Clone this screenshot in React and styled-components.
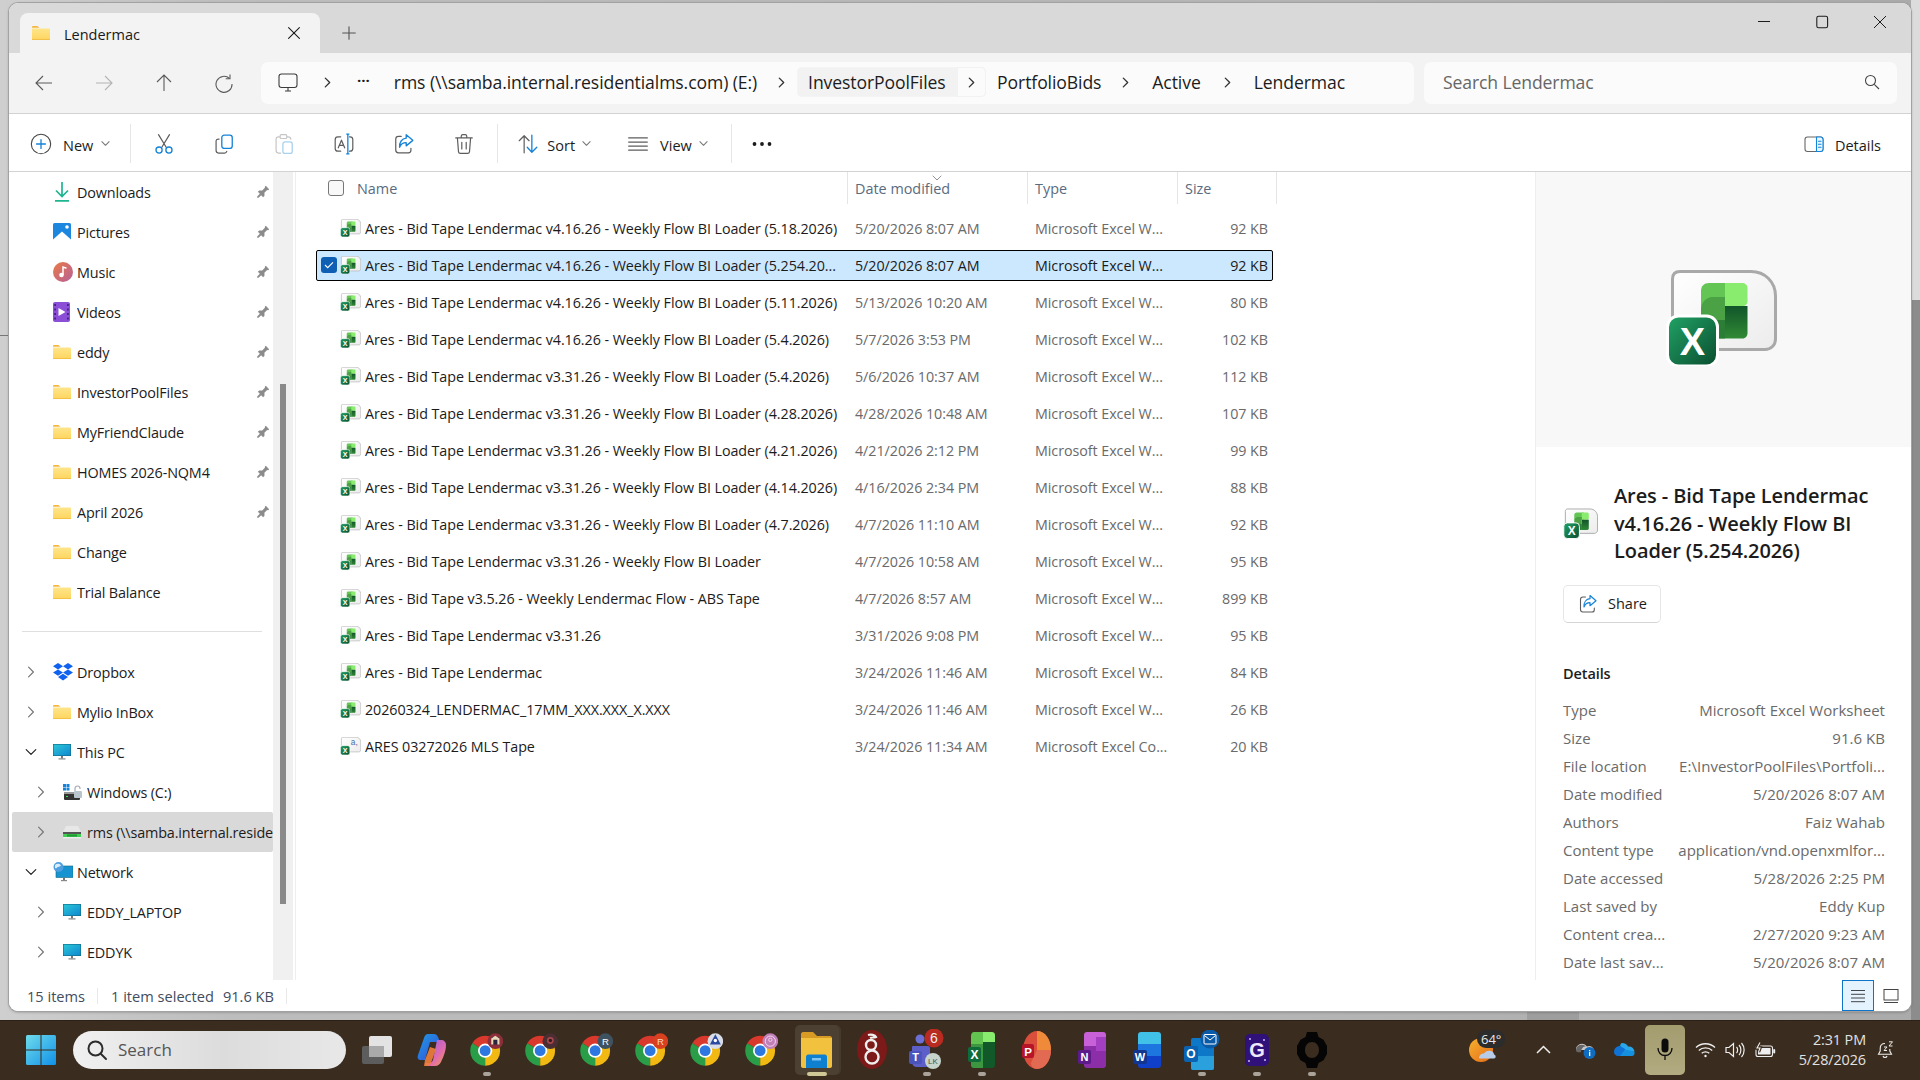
import React from "react";
import styled, { createGlobalStyle } from "styled-components";

const FONT = `"Open Sans", "Noto Sans", "Liberation Sans", sans-serif`;

const Global = createGlobalStyle`
  html, body { margin: 0; padding: 0; width: 1920px; height: 1080px; overflow: hidden; }
  body { font-family: ${FONT}; color: #1b1b1b; }
  * { box-sizing: border-box; }
  svg { display: block; flex: none; }
`;

const Desktop = styled.div`
  width: 1920px; height: 1080px; display: flex; flex-direction: column;
  background:
    linear-gradient(#777, #777) 0 335px / 9px 1px no-repeat,
    linear-gradient(#9e9e9e, #9e9e9e) 1527px 1011px / 52px 9px no-repeat,
    linear-gradient(#dcdcdc 0 300px, #8c8c8c 300px) 1911px 0 / 9px 1020px no-repeat,
    linear-gradient(90deg, #cfcfcf 0, #bdbdbd 12%, #b4b4b4 70%, #aaa 100%);
`;
const Win = styled.div`
  margin: 3px 9px 0; height: 1008px; display: flex; flex-direction: column; overflow: hidden;
  background: #fff; border-radius: 9px; box-shadow: 0 0 0 1px #a2a2a2, 0 1px 3px rgba(0,0,0,.35);
`;
const TitleBar = styled.div`
  height: 50px; flex: none; background: #d9d9d9; display: flex; align-items: flex-end; padding-left: 11px; position: relative;
`;
const Tab = styled.div`
  width: 300px; height: 40px; background: #f3f3f3; border-radius: 8px 8px 0 0; display: flex; align-items: center;
  padding: 0 20px 0 12px; font-size: 14.5px; color: #1a1a1a;
`;
const TabLabel = styled.span`margin: 2px 0 0 14px; flex: 1; font-weight: 500;`;
const NewTab = styled.div`margin: 0 0 10px 19px; width: 20px; height: 20px; color: #555; display: flex; align-items: center; justify-content: center;`;
const WinCtrls = styled.div`
  margin-left: auto; display: flex; align-self: flex-start; margin-top: 9px; padding-right: 21px; gap: 38px; color: #1c1c1c;
`;
const NavBar = styled.div`
  height: 61px; flex: none; background: #f3f3f3; border-bottom: 1px solid #d2d2d2; display: flex; align-items: flex-start; padding: 9px 14px 0 0;
`;
const NavButtons = styled.div`width: 252px; flex: none; display: flex; padding: 11px 0 0 25px; gap: 40px;`;
const AddressBar = styled.div`
  width: 1153px; height: 42px; flex: none; background: #fbfbfb; border-radius: 7px; display: flex; align-items: center; font-size: 17.6px; letter-spacing: -.1px; color: #1c1c1c; white-space: nowrap; padding-bottom: 2px;
`;
const Crumb = styled.span`margin-left: ${p => p.$ml}px;`;
const Chev = styled.span`margin-left: ${p => p.$ml}px; display: flex; color: #333;`;
const HoverCrumb = styled.div`
  margin-left: ${p => p.$ml}px; height: 30px; display: flex; align-items: center; border-radius: 5px; background: #f2f2f2; padding-left: 11px; width: 189px; box-shadow: inset 0 0 0 1px #f4f4f4;
`;
const HoverChev = styled.div`
  margin-left: auto; width: 29px; height: 30px; background: #fbfbfb; border: 1px solid #f2f2f2; border-radius: 0 5px 5px 0; display: flex; align-items: center; justify-content: center; color: #333;
`;
const Dots = styled.span`margin-left: ${p => p.$ml}px; font-weight: 700; letter-spacing: 0; font-size: 15px; transform: translateY(-2px);`;
const SearchBox = styled.div`
  margin-left: 10px; flex: 1; height: 42px; background: #fbfbfb; border-radius: 7px; display: flex; align-items: center; justify-content: space-between; padding: 0 17px 2px 19px; font-size: 17.6px; letter-spacing: -.12px; color: #666;
`;
const Toolbar = styled.div`
  height: 58px; flex: none; background: #fff; border-bottom: 1px solid #d2d2d2; display: flex; align-items: center; padding: 2px 30px 0 22px; font-size: 14.5px; color: #1c1c1c;
`;
const ToolGroup = styled.div`display: flex; align-items: center; gap: ${p => p.$gap || 0}px; margin-left: ${p => p.$ml || 0}px;`;
const ToolSep = styled.div`width: 1px; height: 39px; background: #e6e6e6; margin-left: ${p => p.$ml}px;`;
const ToolText = styled.span`margin: 3px 0 0 ${p => p.$ml}px;`;
const Caret = styled.span`margin-left: ${p => p.$ml}px; color: #777; display: flex;`;
const Spacer = styled.div`flex: 1;`;

const Body = styled.div`flex: 1; min-height: 0; display: flex;`;
const Sidebar = styled.div`width: 264px; flex: none; overflow: hidden; font-size: 14.4px; letter-spacing: -.16px; color: #1c1c1c;`;
const Track = styled.div`width: 20px; flex: none; background: #f0f0f0; padding: 212px 7px 0;`;
const Thumb = styled.div`height: 520px; background: #8a8a8a;`;
const NavRow = styled.div`
  height: 40px; display: flex; align-items: center; margin-left: 3px; white-space: nowrap; overflow: hidden;
  padding-left: ${p => p.$indent ? 51 : 41}px; background: ${p => p.$active ? "#d9d9d9" : "transparent"};
  border-radius: 2px;
`;
const TreeCaret = styled.span`width: 26px; margin: 0 7px 0 -33px; padding-left: 5px; display: flex; color: ${p => p.$open ? "#222" : "#777"};`;
const NavIcon = styled.span`width: 24px; flex: none; display: flex;`;
const NavLabel = styled.span`flex: 1; overflow: hidden;`;
const PinSlot = styled.span`margin-right: 2px; width: 16px; flex: none;`;
const NavSep = styled.div`height: 1px; background: #dfdfdf; margin: 19px 11px 20px 13px;`;

const Main = styled.div`flex: 1; min-width: 0; margin-left: 2px; border-left: 1px solid #eee; font-size: 14.3px; letter-spacing: -.05px;`;
const HeaderRow = styled.div`
  height: 32px; display: grid; grid-template-columns: 519px 180px 150px 100px; padding-left: 32px; position: relative; font-size: 14.4px; letter-spacing: 0;
`;
const HeadCell = styled.div`display: flex; align-items: center; padding-left: ${p => p.$first ? 0 : 7}px; border-left: ${p => p.$first ? "none" : "1px solid #e5e5e5"}; border-right: ${p => p.$last ? "1px solid #e5e5e5" : "none"}; color: #5a6b80;`;
const HeadBox = styled.div`width: 16px; height: 16px; border: 1px solid #777; border-radius: 3px; background: #f8f8f8; margin-right: 13px;`;
const SortMark = styled.div`position: absolute; left: 636px; top: 1px; color: #777;`;
const Rows = styled.div`padding: 8.5px 0 0 20px; display: flex; flex-direction: column; gap: 6px;`;
const Row = styled.div`
  width: 957px; height: 31px; display: grid; grid-template-columns: 19px 25px 490px 180px 150px 83px; align-items: center;
  padding: 0 4px; border: 1px solid ${p => p.$sel ? "#000" : "transparent"}; border-radius: 2px; background: ${p => p.$sel ? "#cce8ff" : "transparent"};
  color: #666; white-space: nowrap;
`;
const CheckSlot = styled.div`width: 16px; height: 16px; border-radius: 3px; background: ${p => p.$on ? "#0f5fb5" : "transparent"}; display: flex; align-items: center; justify-content: center;`;
const NameCell = styled.span`color: #1b1b1b;`;
const Cell = styled.span`color: ${p => p.$sel ? "#1b1b1b" : "#6a6a6a"};`;
const SizeCell = styled(Cell)`text-align: right;`;

const Details = styled.div`width: 376px; flex: none; border-left: 1px solid #eee; display: flex; flex-direction: column; background: #fff;`;
const Preview = styled.div`height: 275px; flex: none; background: #f8f8f8; padding: 98px 0 0 129px;`;
const DetailBody = styled.div`padding: 35px 26px 0 27px;`;
const TitleRow = styled.div`display: flex; align-items: center; gap: 16px;`;
const DetailTitle = styled.div`font-size: 20px; font-weight: 600; line-height: 27.5px; letter-spacing: -.1px; color: #1c1c1c; white-space: nowrap;`;
const ShareBtn = styled.div`
  margin-top: 20px; width: 98px; height: 38px; border: 1px solid #e6e6e6; border-bottom-color: #d4d4d4; border-radius: 5px; display: flex; align-items: center; gap: 10px; padding-left: 14px; font-size: 14.5px; color: #1c1c1c; background: #fff;
`;
const DetailHead = styled.div`margin-top: 40px; font-size: 14.5px; font-weight: 600; letter-spacing: -.1px; color: #1c1c1c; height: 22px; line-height: 22px;`;
const Props = styled.div`margin-top: 11px; display: flex; flex-direction: column;`;
const Prop = styled.div`height: 28px; display: flex; align-items: center; justify-content: space-between; color: #6a6a6a; font-size: 15px; letter-spacing: .03px; white-space: nowrap;`;

const StatusBar = styled.div`height: 31px; flex: none; display: flex; align-items: center; padding-left: 18px; font-size: 14.6px; color: #3f4d60; background: #fff;`;
const StatusItem = styled.span`margin-left: ${p => p.$ml || 0}px;`;
const StatusSep = styled.div`width: 1px; height: 16px; background: #e9e9e9; margin-left: ${p => p.$ml}px;`;
const ViewBtn = styled.div`
  width: ${p => p.$w}px; height: 31px; display: flex; align-items: center; justify-content: center; border: 1px solid ${p => p.$on ? "#0f74c7" : "transparent"}; background: ${p => p.$on ? "#e5f3ff" : "transparent"}; color: #333;
`;
const ViewGroup = styled.div`margin-left: auto; display: flex; padding-right: 4px;`;

const Taskbar = styled.div`
  margin-top: 9px; height: 60px; flex: none; background: #3a2c1e; border-top: 1px solid #2c2117; padding-bottom: 2px; display: flex; align-items: center; position: relative; color: #e8e8e8;
`;
const StartSlot = styled.div`width: 73px; flex: none; padding-left: 26px;`;
const SearchPill = styled.div`
  width: 273px; height: 38px; border-radius: 19px; background: linear-gradient(90deg, #f0f0f0, #dcdcdc 55%, #e8e8e8); display: flex; align-items: center; padding-left: 13px; gap: 10px; color: #555; font-size: 17px; flex: none;
`;
const Apps = styled.div`display: flex; margin-left: 3px;`;
const AppSlot = styled.div`
  width: 55px; height: 50px; display: flex; align-items: center; justify-content: center; position: relative; flex: none;
`;
const AppIcon = styled.span`position: relative;`;
const ActiveBg = styled.div`position: absolute; left: 6px; top: 0; width: 44px; height: 50px; background: #4c4033; border-radius: 5px; box-shadow: 2px 0 0 #453a2e;`;
const RunDot = styled.div`
  position: absolute; bottom: -1px; left: 50%; transform: translateX(-50%); width: ${p => p.$wide ? 20 : 8}px; height: 4px; border-radius: 2px; background: ${p => p.$wide ? "#cfc795" : "#a9a39a"};
`;
const Tray = styled.div`margin-left: auto; display: flex; align-items: center; padding-right: 25px; color: #ededed;`;
const TrayIcon = styled.div`width: ${p => p.$w || 30}px; display: flex; justify-content: center; flex: none; margin-left: ${p => p.$ml || 0}px;`;
const MicBox = styled.div`width: 40px; height: 50px; background: linear-gradient(#a39c6f, #b2aa80); border-radius: 5px; display: flex; align-items: center; justify-content: center; color: #111; margin-left: 6px;`;
const WeatherBox = styled.div`position: relative; width: 30px; height: 30px; margin-right: 29px;`;
const WeatherPill = styled.div`position: absolute; left: 8px; top: -5px; background: #2c2c2c; color: #e9e9e9; border-radius: 9px; font-size: 13px; padding: 0 4px; height: 18px; line-height: 18px; white-space: nowrap;`;
const Clock = styled.div`margin-left: 4px; width: 82px; text-align: right; font-size: 14.4px; line-height: 20px; color: #e2e2e2; letter-spacing: -.1px; white-space: nowrap;`;

/* ---------- drawings ---------- */
const Folder = ({ s = 18 }) => (
  <svg width={s} height={s * 0.8} viewBox="0 0 18 14.4">
    <defs><linearGradient id="fg" x1="0" y1="0" x2="0" y2="1"><stop offset="0" stopColor="#ffe58a" /><stop offset="1" stopColor="#fdd55e" /></linearGradient></defs>
    <path d="M0 1.2C0 .5.5 0 1.2 0h4.2l2 1.8H0z" fill="#f6b73c" />
    <path d="M0 2.4h16.8c.7 0 1.2.5 1.2 1.2v9.6c0 .7-.5 1.2-1.2 1.2H1.2C.5 14.4 0 13.9 0 13.2z" fill="url(#fg)" />
    <path d="M0 13.4h18v.1c0 .5-.5.9-1.2.9H1.2C.5 14.4 0 14 0 13.5z" fill="#e9a92b" />
  </svg>
);

let uid = 0;
const ExcelDoc = ({ w, h, csv }) => {
  const id = React.useMemo(() => "xl" + (uid++), []);
  return (
    <svg width={w} height={h} viewBox="-4 0 112 96">
      <defs>
        <linearGradient id={id + "b"} x1="0" y1="0" x2="1" y2="1"><stop offset="0" stopColor="#21a366" /><stop offset="1" stopColor="#0a4d2f" /></linearGradient>
        <linearGradient id={id + "d"} x1="0" y1="0" x2="1" y2="1"><stop offset="0" stopColor="#ffffff" /><stop offset="1" stopColor="#ececec" /></linearGradient>
        <linearGradient id={id + "s"} x1="0" y1="0" x2="0" y2="1"><stop offset="0" stopColor="#11552a" /><stop offset="1" stopColor="#318a35" /></linearGradient>
      </defs>
      <path d="M11 1.5H82C96 1.5 106.5 12 106.5 26V69C106.5 75 102 79.5 96 79.5H11C6 79.5 3.5 76 3.5 71V9C3.5 4.5 6 1.5 11 1.5Z" fill={`url(#${id}d)`} stroke="#a9a9a9" strokeWidth="3" />
      {csv ? (
        <text x="72" y="42" textAnchor="middle" fontFamily="Liberation Sans, sans-serif" fontSize="44" fill="#4a6ea8">a,</text>
      ) : (
        <g>
          <path d="M40 13h23v23H32V21c0-5 3-8 8-8z" fill="#63c654" />
          <path d="M56 13h17c3 0 5.5 2 5.5 5v13c0 3-2 5-5 5H56z" fill="#8aec6e" />
          <path d="M56 36h22.5v27c0 3-2 5.5-5 5.5H56z" fill={`url(#${id}s)`} />
          <path d="M56 36v32.5H42V65H32V38c0-2 2-9 10-11h14z" fill="#4aa245" />
          <rect x="40" y="50" width="16" height="18.5" fill="#2c7d35" />
        </g>
      )}
      <rect x="-1.5" y="46" width="50" height="50" rx="11" fill={`url(#${id}b)`} stroke="#fff" strokeWidth="3" />
      <text x="23.5" y="85" textAnchor="middle" fontFamily="Liberation Sans, sans-serif" fontWeight="700" fontSize="38" fill="#fff">X</text>
    </svg>
  );
};

const Ic = ({ children, s = 20 }) => <svg width={s} height={s} viewBox="0 0 20 20" fill="none" strokeLinecap="round" strokeLinejoin="round">{children}</svg>;

const G = "#5d5d5d", B = "#1583d8";
const NewIcon = () => <Ic s={22}><circle cx="10" cy="10" r="8.8" stroke="#444" strokeWidth="1" /><path d="M10 6v8M6 10h8" stroke={B} strokeWidth="1.2" /></Ic>;
const CutIcon = () => <Ic s={22}><path d="M5 1.5l7 11.5M15 1.5L8 13" stroke={G} strokeWidth="1.1" /><circle cx="5.5" cy="15.5" r="2.8" stroke={B} strokeWidth="1.2" /><circle cx="14.5" cy="15.5" r="2.8" stroke={B} strokeWidth="1.2" /></Ic>;
const CopyIcon = () => <Ic s={22}><rect x="8" y="2" width="9.5" height="12" rx="2.2" stroke={B} strokeWidth="1.2" /><path d="M5.5 5.5H5C3.5 5.5 2.8 6.4 2.8 7.5V16c0 1.3 1 2.2 2.2 2.2h5.5c1 0 1.8-.6 2-1.5" stroke={G} strokeWidth="1.1" /></Ic>;
const PasteIcon = () => <Ic s={22}><path d="M6 3.5H5C3.5 3.5 2.8 4.4 2.8 5.5V16c0 1.3 1 2.2 2.2 2.2h2M13 3.5h1c1 0 2 .6 2.2 2" stroke="#c6c6c6" strokeWidth="1.1" /><rect x="6.5" y="1.5" width="6" height="3.5" rx="1" stroke="#c6c6c6" strokeWidth="1.1" /><rect x="9" y="8" width="8.5" height="10.5" rx="2" stroke="#a8d2f0" strokeWidth="1.2" /></Ic>;
const RenameIcon = () => <Ic s={22}><path d="M7 3.500H4.500C3 3.500 2 4.500 2 6v8c0 1.500 1 2.500 2.500 2.500H7M15 3.500h.5C17 3.500 18 4.500 18 6v8c0 1.500-1 2.500-2.500 2.500H15" stroke={G} strokeWidth="1.1" /><path d="M4.8 13.500L7.700 6.500l2.900 7M5.800 11.200h3.800" stroke={G} strokeWidth="1.1" /><path d="M12.500 1h2M12.500 19h2M13.500 1v18" stroke={B} strokeWidth="1.2" /></Ic>;
const ShareIcon = ({ s = 22 }) => <Ic s={s}><path d="M7.500 3H5C3.400 3 2.500 4 2.500 5.500v10C2.500 17 3.500 18 5 18h9c1.500 0 2.300-1 2.300-2.300V14" stroke={G} strokeWidth="1.1" /><path d="M12 1.500l6 5.200-6 5v-3C9 8.700 7 10 6 13c-.3-4.500 2-8 6-8.300z" stroke={B} strokeWidth="1.2" /></Ic>;
const TrashIcon = () => <Ic s={22}><path d="M2.500 4.500h15M7.500 4.500V3c0-.9.6-1.500 1.500-1.500h2c.9 0 1.500.6 1.500 1.500v1.500M4 4.500l1 12.500c.1 1 .8 1.500 1.700 1.500h6.600c.9 0 1.600-.5 1.700-1.500l1-12.500" stroke={G} strokeWidth="1.1" /><path d="M8 8.500v6M12 8.500v6" stroke={G} strokeWidth="1.1" /></Ic>;
const SortIcon = () => <Ic s={22}><path d="M6.500 18V2.500M2 7l4.500-4.500L11 7" stroke={G} strokeWidth="1.1" /><path d="M13.500 2v15.500M9.300 13l4.200 4.500 4.500-4.500" stroke={B} strokeWidth="1.2" /></Ic>;
const ViewIcon = () => <Ic s={22}><path d="M1.500 4.500h17M1.500 8.200h17M1.500 11.900h17M1.500 15.600h17" stroke={G} strokeWidth="1.1" /></Ic>;
const DetailsIcon = () => <Ic s={20}><rect x="1" y="3" width="18" height="14.500" rx="2.500" stroke="#666" strokeWidth="1.1" /><path d="M12.500 3h4c1.500 0 2.500 1 2.500 2.500v9.500c0 1.500-1 2.500-2.500 2.500h-4z" fill="#e9f5ff" stroke={B} strokeWidth="1.1" /><path d="M14.500 7.200h2.500M14.500 10.200h2.500M14.500 13.200h2.500" stroke={B} strokeWidth="1.1" /></Ic>;
const Small = ({ d, s = 10, sw = 1 }) => <svg width={s} height={s} viewBox="0 0 10 10" fill="none"><path d={d} stroke="currentColor" strokeWidth={sw} strokeLinecap="round" strokeLinejoin="round" /></svg>;
const Right = ({ s = 11, sw = 1.2 }) => <Small s={s} sw={sw} d="M3 1l4 4-4 4" />;
const Down = ({ s = 11, sw = 1.2 }) => <Small s={s} sw={sw} d="M1 3l4 4 4-4" />;

const Pin = () => <svg width="15" height="15" viewBox="0 0 16 16"><path fill="#8b8b8b" transform="rotate(45 8 8)" d="M5.500.5h5V2l-.8.700v4.100l2.300 2.200V11H9v4l-1 1-1-1v-4H4V9l2.300-2.200V2.700L5.500 2z" /></svg>;
const DlIcon = () => <svg width="18" height="20" viewBox="0 0 18 20" fill="none"><path d="M9 0v14M3 8.500L9 14.500l6-6" stroke="#1fb58f" strokeWidth="1.7" /><path d="M2 18.800h14" stroke="#1fb58f" strokeWidth="1.7" /></svg>;
const PicIcon = () => <svg width="18" height="18" viewBox="0 0 18 18"><rect width="18" height="18" rx="1.500" fill="#1d87e0" /><path d="M0 16.500L9 8.500l9 8v1.500H0z" fill="#fff" /><circle cx="14" cy="4" r="1.800" fill="#fff" /></svg>;
const MusicIcon = () => <svg width="20" height="20" viewBox="0 0 20 20"><defs><linearGradient id="mu" x1="0" y1="0" x2="1" y2="1"><stop offset="0" stopColor="#e97b43" /><stop offset="1" stopColor="#b75f9c" /></linearGradient></defs><circle cx="10" cy="10" r="10" fill="url(#mu)" /><circle cx="8.500" cy="13" r="2.300" fill="#fff" /><path d="M10 13V5l3.500 1.200" stroke="#fff" strokeWidth="1.5" fill="none" /></svg>;
const VideoIcon = () => <svg width="17" height="20" viewBox="0 0 17 20"><rect width="17" height="20" rx="2" fill="#8a4fd6" /><path d="M5.500 6l7 4-7 4z" fill="#fff" /><g fill="#3d1d80"><rect x="1.3" y="2" width="1.6" height="2" /><rect x="1.3" y="6.500" width="1.6" height="2" /><rect x="1.3" y="11" width="1.6" height="2" /><rect x="1.3" y="15.500" width="1.6" height="2" /><rect x="14.1" y="2" width="1.6" height="2" /><rect x="14.1" y="6.500" width="1.6" height="2" /><rect x="14.1" y="11" width="1.6" height="2" /><rect x="14.1" y="15.500" width="1.6" height="2" /></g></svg>;
const DropboxIcon = () => <svg width="20" height="18" viewBox="0 0 20 18" fill="#0f62f0"><path d="M5 0l5 3.200-5 3.200L0 3.200zM15 0l5 3.200-5 3.200-5-3.200zM0 9.600l5-3.200 5 3.200-5 3.200zM15 6.400l5 3.200-5 3.200-5-3.200zM5 14l5-3.200 5 3.200-5 3.400z" /></svg>;
const PCIcon = ({ s = 18 }) => <svg width={s} height={s * 16 / 18} viewBox="0 0 18 16"><defs><linearGradient id="pc" x1="0" y1="0" x2="1" y2="1"><stop offset="0" stopColor="#2bc6d8" /><stop offset="1" stopColor="#1088d0" /></linearGradient></defs><rect y="0" width="18" height="12" fill="#0d6b86" /><rect x=".6" y=".6" width="16.8" height="10.8" fill="url(#pc)" /><rect x="8" y="12" width="2" height="2.500" fill="#777" /><rect x="5.500" y="14.300" width="7" height="1.200" fill="#888" /></svg>;
const WinDrive = () => <svg width="20" height="17" viewBox="0 0 20 17"><g fill="#1683d8"><rect width="3" height="3" /><rect x="3.500" width="3" height="3" /><rect y="3.500" width="3" height="3" /><rect x="3.500" y="3.500" width="3" height="3" /></g><rect x="1" y="8" width="16" height="8" rx="1" fill="#333" /><rect x="1" y="8" width="16" height="2" fill="#999" /><rect x="3" y="12" width="2" height="1" fill="#3ddc5a" /><path d="M12 7V4.500a2.500 2.500 0 015 0V5" stroke="#aab" strokeWidth="1.2" fill="none" /><rect x="11" y="7" width="8" height="7" rx="1" fill="#b9c4cc" /></svg>;
const NetDrive = () => <svg width="18" height="13" viewBox="0 0 18 13"><path d="M3 0h12l3 6H0z" fill="#e7e7e7" /><rect y="6" width="18" height="2" fill="#555" /><rect y="8" width="18" height="3" fill="#3fcf52" /><rect x="4" y="8.500" width="10" height="2" fill="#1f9a32" /><rect y="11" width="18" height="1.500" fill="#eee" /></svg>;
const NetIcon = () => <svg width="20" height="20" viewBox="0 0 20 20"><rect x="3" y="4" width="17" height="11.500" fill="#1793d1" stroke="#0d6b86" strokeWidth=".6" /><rect x="10" y="15.500" width="2" height="2.500" fill="#777" /><rect x="8" y="18" width="6" height="1.200" fill="#888" /><circle cx="5.500" cy="5" r="5" fill="#4f9fe0" /><path d="M2 3c2-2 5-1.500 6 .5-1 1-2 1-3 1.500S3 7 2 6z" fill="#dceefb" /></svg>;

const CheckMark = () => <svg width="10" height="8" viewBox="0 0 10 8" fill="none"><path d="M1 4l2.700 2.700L9 1.300" stroke="#fff" strokeWidth="1.1" /></svg>;

const Chrome = ({ badge, children }) => (
  <svg width="33" height="34" viewBox="0 0 48 50">
    <g transform="translate(0 4)">
      <path d="M22 22L2.950 11A22 22 0 0 1 41.050 11Z" fill="#d9382c" />
      <path d="M22 22L41.050 11A22 22 0 0 1 22 44Z" fill="#f2b912" />
      <path d="M22 22L22 44A22 22 0 0 1 2.950 11Z" fill="#2a9d49" />
      <circle cx="22" cy="22" r="10.500" fill="#fff" />
      <circle cx="22" cy="22" r="8" fill="#2d78e0" />
    </g>
    {badge && <circle cx="37" cy="12" r="11.500" fill={badge} />}
    {children}
  </svg>
);
const BadgeR = ({ c = "#fff" }) => <text x="37" y="17" textAnchor="middle" fontSize="14" fontFamily="Liberation Sans, sans-serif" fill={c}>R</text>;

const TaskIcons = {
  taskview: () => <svg width="30" height="28" viewBox="0 0 30 28"><rect x="0" y="10" width="22" height="18" rx="2" fill="#5d5d5d" /><rect x="7" y="0" width="23" height="21" rx="2" fill="#e3e3e3" /><rect x="7" y="10" width="15" height="11" fill="#a9a9a9" /></svg>,
  copilot: () => <svg width="30" height="32" viewBox="0 0 30 32"><defs><linearGradient id="c1" x1="0" y1="0" x2="1" y2="1"><stop offset="0" stopColor="#1e9de0" /><stop offset=".6" stopColor="#2c6be0" /><stop offset="1" stopColor="#64c066" /></linearGradient><linearGradient id="c2" x1="0" y1="0" x2="1" y2="1"><stop offset="0" stopColor="#8a5fe0" /><stop offset=".6" stopColor="#e06ab0" /><stop offset="1" stopColor="#f0a040" /></linearGradient></defs><path d="M11 0h6c2 0 3 1 4 3l2 5H13L8 26H4c-3 0-4-2-3-5L7 4c1-3 2-4 4-4z" fill="url(#c1)" /><path d="M20 6h4c3 0 5 2 5 5 0 6-3 13-5 17-1 2-3 4-6 4h-7c-2 0-3-1-3-3h4c2 0 3-1 4-3z" fill="url(#c2)" /><path d="M8 26l5-13 6 2-5 14c-.5 1.500-2 3-4 3H7z" fill="#f07f3c" opacity=".9" /></svg>,
  explorer: () => <svg width="31" height="36" viewBox="0 0 31 36"><path d="M0 2c0-1 1-2 2-2h10l4 4h13c1 0 2 1 2 2v4H0z" fill="#d79b25" /><path d="M0 6h31v28c0 1-1 2-2 2H2c-1 0-2-1-2-2z" fill="#f2c23f" /><path d="M5 25c0-1.500 1-2.500 2-2.500h17c1 0 2 1 2 2.500v11H5z" fill="#0f7fd0" /><rect x="11" y="26" width="9" height="2.500" fill="#7fc4f2" /></svg>,
  wire: () => <svg width="30" height="39" viewBox="0 0 30 39"><ellipse cx="15" cy="19.500" rx="15" ry="19.500" fill="#7b1a18" /><circle cx="15" cy="27" r="6.500" fill="none" stroke="#eee" strokeWidth="2.4" /><circle cx="14" cy="15" r="5" fill="none" stroke="#eee" strokeWidth="2.4" /><path d="M11 5c3-1 7 0 8 2-2 1-4 0-6 1" stroke="#eee" strokeWidth="2.2" fill="none" /></svg>,
  teams: () => <svg width="36" height="42" viewBox="0 0 36 42"><circle cx="11" cy="10" r="4.500" fill="#6b6fd6" /><circle cx="25" cy="9" r="9.500" fill="#b92a20" /><text x="25" y="14" textAnchor="middle" fontSize="14" fontFamily="Liberation Sans, sans-serif" fill="#eee">6</text><path d="M4 17h15c1 0 2 1 2 2v14c0 3-2 5-5 5H8c-3 0-5-2-5-5V18c0-.5.500-1 1-1z" fill="#5b5fc7" /><rect x="0" y="22" width="13" height="13" rx="2" fill="#4b53bc" /><text x="6.500" y="32" textAnchor="middle" fontSize="11" fontWeight="700" fontFamily="Liberation Sans, sans-serif" fill="#fff">T</text><circle cx="24" cy="32" r="8" fill="#c7d4cc" /><text x="24" y="35" textAnchor="middle" fontSize="8" fontFamily="Liberation Sans, sans-serif" fill="#3a5a50">LK</text></svg>,
  excel: () => <svg width="27" height="36" viewBox="0 0 27 36"><path d="M6 0h9v12H3V4c0-2 1-4 3-4z" fill="#62c350" /><path d="M15 0h9c1.500 0 3 1 3 3v9H15z" fill="#8aec6e" /><path d="M15 10h12v23c0 2-1 3-3 3H15z" fill="#12592a" /><path d="M3 12h12v24H6c-2 0-3-1-3-3z" fill="#3c9740" /><rect x="0" y="15" width="13" height="15" rx="2" fill="#0f6b3a" /><text x="6.500" y="27" textAnchor="middle" fontSize="12" fontWeight="700" fontFamily="Liberation Sans, sans-serif" fill="#fff">X</text></svg>,
  ppt: () => <svg width="29" height="38" viewBox="0 0 29 38"><ellipse cx="15" cy="19" rx="14" ry="19" fill="#d94f3c" /><path d="M15 0c8 0 14 8 14 19H15z" fill="#ee8a3a" /><path d="M15 19h14c0 10-6 19-14 19-4 0-6-3-6-6z" fill="#e36a52" /><rect x="0" y="13" width="12" height="14" rx="2" fill="#b7142a" /><text x="6" y="25" textAnchor="middle" fontSize="11.5" fontWeight="700" fontFamily="Liberation Sans, sans-serif" fill="#fff">P</text></svg>,
  onenote: () => <svg width="28" height="36" viewBox="0 0 28 36"><path d="M6 3c0-2 1-3 3-3h16c2 0 3 1 3 3v13H6z" fill="#c861d8" /><path d="M6 14h22v19c0 2-1 3-3 3H9c-2 0-3-1-3-3z" fill="#8d2ea9" /><path d="M18 5h10v14h-10z" fill="#a43fc2" /><rect x="0" y="18" width="13" height="14" rx="2" fill="#5c1b8a" /><text x="6.500" y="29" textAnchor="middle" fontSize="11" fontWeight="700" fontFamily="Liberation Sans, sans-serif" fill="#fff">N</text></svg>,
  word: () => <svg width="28" height="36" viewBox="0 0 28 36"><path d="M5 3c0-2 1-3 3-3h17c2 0 3 1 3 3v9H5z" fill="#41c0e8" /><rect x="5" y="12" width="23" height="12" fill="#1d76e0" /><path d="M5 24h23v9c0 2-1 3-3 3H8c-2 0-3-1-3-3z" fill="#1040c8" /><rect x="0" y="18" width="14" height="14" rx="2" fill="#12368f" /><text x="7" y="29" textAnchor="middle" fontSize="11" fontWeight="700" fontFamily="Liberation Sans, sans-serif" fill="#fff">W</text></svg>,
  outlook: () => <svg width="36" height="40" viewBox="0 0 36 40"><rect x="7" y="8" width="23" height="32" rx="2" fill="#0d78c8" /><path d="M7 26h23v12c0 1-1 2-2 2H9c-1 0-2-1-2-2z" fill="#2aa0dc" /><rect x="0" y="16" width="14" height="16" rx="2" fill="#0a62b0" /><text x="7" y="28" textAnchor="middle" fontSize="12" fontWeight="700" fontFamily="Liberation Sans, sans-serif" fill="#fff">O</text><circle cx="26" cy="9" r="9.500" fill="#0b5aa8" /><rect x="20" y="4.500" width="12" height="9.500" rx="1" fill="none" stroke="#fff" strokeWidth="1" /><path d="M20.500 5.500L26 10l5.500-4.500" stroke="#fff" strokeWidth="1" fill="none" /></svg>,
  g: () => <svg width="24" height="32" viewBox="0 0 24 32"><rect width="24" height="32" rx="5" fill="#301079" /><text x="12" y="23" textAnchor="middle" fontSize="20" fontWeight="700" fontFamily="Liberation Sans, sans-serif" fill="#efe9ff">G</text><g fill="#c9b8f0"><circle cx="5" cy="5" r="1" /><circle cx="19" cy="6" r="1" /><circle cx="20" cy="26" r="1" /><circle cx="4" cy="27" r="1" /></g></svg>,
  gear: () => <svg width="30" height="36" viewBox="0 0 30 36"><path fill="#050505" fillRule="evenodd" d="M10 0h10l1.500 5 5 2.800L30 14v8l-3.500 6.200-5 2.800L20 36H10l-1.500-5-5-2.800L0 22v-8l3.500-6.200 5-2.800zM15 10c-4 0-7 3.500-7 8s3 8 7 8 7-3.500 7-8-3-8-7-8z" /></svg>,
};

const TrayDraw = {
  caret: () => <svg width="15" height="9" viewBox="0 0 15 9" fill="none"><path d="M1 8l6.500-6.500L14 8" stroke="#eee" strokeWidth="1.5" /></svg>,
  cloudInfo: () => <svg width="22" height="20" viewBox="0 0 22 20"><path d="M1 10a6 6 0 0111-3.500A5 5 0 0119 10z" fill="#c9c9c9" /><path d="M1 10a6 6 0 0110-3.700c-3 0-5 3-5 6H3C1.500 12 1 11 1 10z" fill="#666" /><circle cx="14.500" cy="13" r="6" fill="#0f6cc0" /><rect x="14" y="12" width="1.300" height="4" fill="#fff" /><rect x="14" y="10" width="1.300" height="1.300" fill="#fff" /></svg>,
  onedrive: () => <svg width="21" height="13" viewBox="0 0 21 13"><path d="M8 0c3 0 5 1.500 6 3.500 3-.5 6 1.500 6.500 5H10L6 3C6.500 1 7 0 8 0z" fill="#28a8ea" /><path d="M6 3c-3.500 0-6 2.500-6 6 0 2.300 1.700 4 4 4h6.500L11 6z" fill="#0f72d4" /><path d="M6 13h12c1.500 0 3-1.500 2.500-4.500L11 6.500 6 13z" fill="#1490df" /></svg>,
  mic: () => <svg width="16" height="23" viewBox="0 0 16 23" fill="none"><rect x="4.500" y="0.500" width="7" height="14" rx="3.500" fill="#0c0c0c" /><path d="M1 10c0 4.500 3 7.500 7 7.500s7-3 7-7.500M8 17.500V22" stroke="#0c0c0c" strokeWidth="1.3" /></svg>,
  wifi: () => <svg width="21" height="16" viewBox="0 0 21 16" fill="none" stroke="#eee" strokeWidth="1.3"><path d="M1 5.500c5-5 14-5 19 0M3.800 8.500c3.600-3.500 9.800-3.500 13.400 0M6.700 11.300c2.100-1.800 5.500-1.800 7.600 0" /><circle cx="10.500" cy="14" r="1.200" fill="#eee" stroke="none" /></svg>,
  volume: () => <svg width="21" height="16" viewBox="0 0 21 16" fill="none" stroke="#eee" strokeWidth="1.2"><path d="M1 5.500h3L8.500 1.500v13L4 10.500H1z" /><path d="M11.500 5c1.500 1.500 1.500 4.500 0 6M14 3c2.500 2.500 2.500 7.500 0 10M16.500 1c3.500 4 3.500 10 0 14" /></svg>,
  battery: () => <svg width="21" height="16" viewBox="0 0 21 16" fill="none"><rect x="1" y="4" width="16.500" height="10.500" rx="2" stroke="#eee" strokeWidth="1.1" /><rect x="3" y="6" width="12.500" height="6.500" rx=".5" fill="#eee" /><rect x="18.200" y="7" width="2" height="4.500" rx="1" fill="#eee" /><path d="M5 0L2 6h3L3.500 10" stroke="#3a2c1e" strokeWidth="3.5" /><path d="M5 0.500L2 6h3L3.500 10" stroke="#eee" strokeWidth="1.1" /></svg>,
  bell: () => <svg width="17" height="18" viewBox="0 0 17 18" fill="none" stroke="#eee" strokeWidth="1.1"><path d="M8 2.500C5 2.500 3.200 4.700 3.200 7.500V10L1.500 13.200h13L12.800 10V8" /><path d="M6 15c.5 2 3.500 2 4 0" /><path d="M7 6h3l-3 3.500h3M12 .8h3.500L12 5h3.500" strokeWidth="1" /></svg>,
  winlogo: () => <svg width="30" height="30" viewBox="0 0 30 30"><defs><linearGradient id="w" x1="0" y1="0" x2="1" y2="1"><stop offset="0" stopColor="#6fdcec" /><stop offset="1" stopColor="#1090e8" /></linearGradient></defs><rect width="30" height="30" fill="url(#w)" rx="1.500" /><path d="M14.500 0h1v30h-1zM0 14.500h30v1H0z" fill="#3a2c1e" /></svg>,
  searchGlass: () => <svg width="22" height="22" viewBox="0 0 22 22" fill="none" stroke="#2c2c2c" strokeWidth="2"><circle cx="9.500" cy="9.500" r="7" /><path d="M15 15l5 5" strokeLinecap="round" /></svg>,
  weather: () => <svg width="30" height="30" viewBox="0 0 30 30"><defs><linearGradient id="sun" x1="0" y1="0" x2="1" y2="1"><stop offset="0" stopColor="#f4b12e" /><stop offset="1" stopColor="#e86c18" /></linearGradient></defs><circle cx="12" cy="15" r="12" fill="url(#sun)" /><path d="M10 23c0-3 3-5 5-4.500C16 16.500 19 15 22 16c2 .5 3 2 3 3.500 2 .5 2.500 3.500 0 4H11.500c-1 0-1.500-.2-1.500-.5z" fill="#b7cce8" /></svg>,
};

/* ---------- data ---------- */
const NAME = "Ares - Bid Tape Lendermac";
const files = [
  [`${NAME} v4.16.26 - Weekly Flow BI Loader (5.18.2026)`, "5/20/2026 8:07 AM", "Microsoft Excel W...", "92 KB"],
  [`${NAME} v4.16.26 - Weekly Flow BI Loader (5.254.20...`, "5/20/2026 8:07 AM", "Microsoft Excel W...", "92 KB", true],
  [`${NAME} v4.16.26 - Weekly Flow BI Loader (5.11.2026)`, "5/13/2026 10:20 AM", "Microsoft Excel W...", "80 KB"],
  [`${NAME} v4.16.26 - Weekly Flow BI Loader (5.4.2026)`, "5/7/2026 3:53 PM", "Microsoft Excel W...", "102 KB"],
  [`${NAME} v3.31.26 - Weekly Flow BI Loader (5.4.2026)`, "5/6/2026 10:37 AM", "Microsoft Excel W...", "112 KB"],
  [`${NAME} v3.31.26 - Weekly Flow BI Loader (4.28.2026)`, "4/28/2026 10:48 AM", "Microsoft Excel W...", "107 KB"],
  [`${NAME} v3.31.26 - Weekly Flow BI Loader (4.21.2026)`, "4/21/2026 2:12 PM", "Microsoft Excel W...", "99 KB"],
  [`${NAME} v3.31.26 - Weekly Flow BI Loader (4.14.2026)`, "4/16/2026 2:34 PM", "Microsoft Excel W...", "88 KB"],
  [`${NAME} v3.31.26 - Weekly Flow BI Loader (4.7.2026)`, "4/7/2026 11:10 AM", "Microsoft Excel W...", "92 KB"],
  [`${NAME} v3.31.26 - Weekly Flow BI Loader`, "4/7/2026 10:58 AM", "Microsoft Excel W...", "95 KB"],
  ["Ares - Bid Tape v3.5.26 - Weekly Lendermac Flow - ABS Tape", "4/7/2026 8:57 AM", "Microsoft Excel W...", "899 KB"],
  [`${NAME} v3.31.26`, "3/31/2026 9:08 PM", "Microsoft Excel W...", "95 KB"],
  [NAME, "3/24/2026 11:46 AM", "Microsoft Excel W...", "84 KB"],
  ["20260324_LENDERMAC_17MM_XXX.XXX_X.XXX", "3/24/2026 11:46 AM", "Microsoft Excel W...", "26 KB"],
  ["ARES 03272026 MLS Tape", "3/24/2026 11:34 AM", "Microsoft Excel Co...", "20 KB", false, true],
];
const props = [
  ["Type", "Microsoft Excel Worksheet"], ["Size", "91.6 KB"], ["File location", "E:\\InvestorPoolFiles\\Portfoli..."],
  ["Date modified", "5/20/2026 8:07 AM"], ["Authors", "Faiz Wahab"], ["Content type", "application/vnd.openxmlfor..."],
  ["Date accessed", "5/28/2026 2:25 PM"], ["Last saved by", "Eddy Kup"], ["Content crea...", "2/27/2020 9:23 AM"], ["Date last sav...", "5/20/2026 8:07 AM"],
];
const quick = [
  [<DlIcon />, "Downloads"], [<PicIcon />, "Pictures"], [<MusicIcon />, "Music"], [<VideoIcon />, "Videos"],
  [<Folder />, "eddy"], [<Folder />, "InvestorPoolFiles"], [<Folder />, "MyFriendClaude"], [<Folder />, "HOMES 2026-NQM4"], [<Folder />, "April 2026"],
];
const apps = [
  { i: <TaskIcons.taskview /> }, { i: <TaskIcons.copilot /> },
  { i: <Chrome badge="#8c2f3a"><rect x="32" y="6" width="10" height="11" fill="#2b2440" /><path d="M31 17V8l6-4 6 4v9h-3v-7h-6v7z" fill="#e9d9b8" /></Chrome>, dot: true },
  { i: <Chrome badge="#4a2e33"><circle cx="37" cy="11" r="5" fill="#a5484a" /><circle cx="37" cy="11" r="2.500" fill="#2c1b20" /></Chrome> },
  { i: <Chrome badge="#3f5260"><BadgeR /></Chrome> },
  { i: <Chrome badge="#d9401f"><BadgeR c="#f7d8c8" /></Chrome> },
  { i: <Chrome badge="#d8dde8"><path d="M37 2l8 15H29z" fill="#2a4aa0" /><circle cx="37" cy="11" r="2.500" fill="#fff" /></Chrome> },
  { i: <Chrome badge="#c17fb8"><circle cx="37" cy="12" r="7.500" fill="none" stroke="#f6dff0" strokeWidth="1.3" /><circle cx="37" cy="10" r="2.500" fill="none" stroke="#f6dff0" strokeWidth="1.2" /></Chrome> },
  { i: <TaskIcons.explorer />, active: true, wide: true },
  { i: <TaskIcons.wire /> }, { i: <TaskIcons.teams />, dot: true }, { i: <TaskIcons.excel />, dot: true }, { i: <TaskIcons.ppt /> },
  { i: <TaskIcons.onenote /> }, { i: <TaskIcons.word /> }, { i: <TaskIcons.outlook />, dot: true }, { i: <TaskIcons.g />, dot: true }, { i: <TaskIcons.gear />, dot: true },
];

export default function App() {
  return (
    <Desktop>
      <Global />
      <Win>
        <TitleBar>
          <Tab>
            <Folder />
            <TabLabel>Lendermac</TabLabel>
            <Small s={12} sw={.9} d="M.5.5l9 9M9.500.5l-9 9" />
          </Tab>
          <NewTab><Small s={14} sw={.8} d="M5 .5v9M.5 5h9" /></NewTab>
          <WinCtrls>
            <svg width="20" height="20" viewBox="0 0 20 20"><path d="M4 9.500h12" stroke="#1c1c1c" strokeWidth="1" /></svg>
            <svg width="20" height="20" viewBox="0 0 20 20" fill="none"><rect x="4.800" y="4.300" width="10.800" height="11.500" rx="1.800" stroke="#1c1c1c" strokeWidth="1.1" /></svg>
            <svg width="20" height="20" viewBox="0 0 20 20" fill="none"><path d="M4 4l12 12M16 4L4 16" stroke="#1c1c1c" strokeWidth="1" /></svg>
          </WinCtrls>
        </TitleBar>
        <NavBar>
          <NavButtons>
            <svg width="20" height="20" viewBox="0 0 20 20" fill="none" stroke="#5a5a5a" strokeWidth="1.1"><path d="M2 10h16M9 3l-7 7 7 7" /></svg>
            <svg width="20" height="20" viewBox="0 0 20 20" fill="none" stroke="#b4b4b4" strokeWidth="1.1"><path d="M2 10h16M11 3l7 7-7 7" /></svg>
            <svg width="20" height="20" viewBox="0 0 20 20" fill="none" stroke="#5a5a5a" strokeWidth="1.1"><path d="M10 18V2M3 9l7-7 7 7" /></svg>
            <svg width="20" height="20" viewBox="0 0 20 20" fill="none" stroke="#5a5a5a" strokeWidth="1.1"><path d="M15.500 5.500A8 8 0 1018 11" /><path d="M16 1.500v4.300h-4.300" /></svg>
          </NavButtons>
          <AddressBar>
            <Chev $ml={17}>
              <svg width="20" height="19" viewBox="0 0 20 19" fill="none" stroke="#3c3c3c" strokeWidth="1.1"><rect x="1" y="1" width="18" height="13.500" rx="2.500" /><path d="M7 18h6M10 14.500V18" /></svg>
            </Chev>
            <Chev $ml={24}><Right /></Chev>
            <Dots $ml={24}>···</Dots>
            <Crumb $ml={24}>rms (\\samba.internal.residentialms.com) (E:)</Crumb>
            <Chev $ml={19}><Right /></Chev>
            <HoverCrumb $ml={10}>InvestorPoolFiles<HoverChev><Right /></HoverChev></HoverCrumb>
            <Crumb $ml={11}>PortfolioBids</Crumb>
            <Chev $ml={19}><Right /></Chev>
            <Crumb $ml={21}>Active</Crumb>
            <Chev $ml={21}><Right /></Chev>
            <Crumb $ml={21}>Lendermac</Crumb>
          </AddressBar>
          <SearchBox>
            Search Lendermac
            <svg width="16" height="16" viewBox="0 0 16 16" fill="none" stroke="#444" strokeWidth="1.1"><circle cx="6.500" cy="6.500" r="5" /><path d="M10.300 10.300L15 15" /></svg>
          </SearchBox>
        </NavBar>
        <Toolbar>
          <ToolGroup $ml={-1}><NewIcon /><ToolText $ml={11}>New</ToolText><Caret $ml={8}><Down s={9} /></Caret></ToolGroup>
          <ToolSep $ml={20} />
          <ToolGroup $ml={22} $gap={38}><CutIcon /><CopyIcon /><PasteIcon /><RenameIcon /><ShareIcon /><TrashIcon /></ToolGroup>
          <ToolSep $ml={22} />
          <ToolGroup $ml={19}><SortIcon /><ToolText $ml={8}>Sort</ToolText><Caret $ml={7}><Down s={9} /></Caret></ToolGroup>
          <ToolGroup $ml={36}><ViewIcon /><ToolText $ml={11}>View</ToolText><Caret $ml={7}><Down s={9} /></Caret></ToolGroup>
          <ToolSep $ml={23} />
          <ToolGroup $ml={20}>
            <svg width="20" height="6" viewBox="0 0 20 6" fill="#1c1c1c"><circle cx="2.500" cy="3" r="1.900" /><circle cx="10" cy="3" r="1.900" /><circle cx="17.500" cy="3" r="1.900" /></svg>
          </ToolGroup>
          <Spacer />
          <ToolGroup><DetailsIcon /><ToolText $ml={11}>Details</ToolText></ToolGroup>
        </Toolbar>
        <Body>
          <Sidebar>
            {quick.map(([ic, label]) => (
              <NavRow key={label}><NavIcon>{ic}</NavIcon><NavLabel>{label}</NavLabel><PinSlot><Pin /></PinSlot></NavRow>
            ))}
            <NavRow><NavIcon><Folder /></NavIcon><NavLabel>Change</NavLabel></NavRow>
            <NavRow><NavIcon><Folder /></NavIcon><NavLabel>Trial Balance</NavLabel></NavRow>
            <NavSep />
            <NavRow><TreeCaret><Right s={12} sw={1} /></TreeCaret><NavIcon><DropboxIcon /></NavIcon><NavLabel>Dropbox</NavLabel></NavRow>
            <NavRow><TreeCaret><Right s={12} sw={1} /></TreeCaret><NavIcon><Folder /></NavIcon><NavLabel>Mylio InBox</NavLabel></NavRow>
            <NavRow><TreeCaret $open><Down s={12} sw={1} /></TreeCaret><NavIcon><PCIcon /></NavIcon><NavLabel>This PC</NavLabel></NavRow>
            <NavRow $indent><TreeCaret><Right s={12} sw={1} /></TreeCaret><NavIcon><WinDrive /></NavIcon><NavLabel>Windows (C:)</NavLabel></NavRow>
            <NavRow $indent $active><TreeCaret><Right s={12} sw={1} /></TreeCaret><NavIcon><NetDrive /></NavIcon><NavLabel>rms (\\samba.internal.reside</NavLabel></NavRow>
            <NavRow><TreeCaret $open><Down s={12} sw={1} /></TreeCaret><NavIcon><NetIcon /></NavIcon><NavLabel>Network</NavLabel></NavRow>
            <NavRow $indent><TreeCaret><Right s={12} sw={1} /></TreeCaret><NavIcon><PCIcon /></NavIcon><NavLabel>EDDY_LAPTOP</NavLabel></NavRow>
            <NavRow $indent><TreeCaret><Right s={12} sw={1} /></TreeCaret><NavIcon><PCIcon /></NavIcon><NavLabel>EDDYK</NavLabel></NavRow>
          </Sidebar>
          <Track><Thumb /></Track>
          <Main>
            <HeaderRow>
              <HeadCell $first><HeadBox />Name</HeadCell>
              <HeadCell>Date modified</HeadCell>
              <HeadCell>Type</HeadCell>
              <HeadCell $last>Size</HeadCell>
              <SortMark><Down s={10} sw={.8} /></SortMark>
            </HeaderRow>
            <Rows>
              {files.map(([n, d, t, s, sel, csv]) => (
                <Row key={n} $sel={sel}>
                  <CheckSlot $on={sel}>{sel && <CheckMark />}</CheckSlot>
                  <ExcelDoc w={21} h={18} csv={csv} />
                  <NameCell>{n}</NameCell>
                  <Cell $sel={sel}>{d}</Cell>
                  <Cell $sel={sel}>{t}</Cell>
                  <SizeCell $sel={sel}>{s}</SizeCell>
                </Row>
              ))}
            </Rows>
          </Main>
          <Details>
            <Preview><ExcelDoc w={112} h={96} /></Preview>
            <DetailBody>
              <TitleRow>
                <ExcelDoc w={35} h={31} />
                <DetailTitle>Ares - Bid Tape Lendermac<br />v4.16.26 - Weekly Flow BI<br />Loader (5.254.2026)</DetailTitle>
              </TitleRow>
              <ShareBtn><ShareIcon s={20} />Share</ShareBtn>
              <DetailHead>Details</DetailHead>
              <Props>
                {props.map(([k, v]) => <Prop key={k}><span>{k}</span><span>{v}</span></Prop>)}
              </Props>
            </DetailBody>
          </Details>
        </Body>
        <StatusBar>
          <StatusItem>15 items</StatusItem>
          <StatusSep $ml={12} />
          <StatusItem $ml={13}>1 item selected</StatusItem>
          <StatusItem $ml={9}>91.6 KB</StatusItem>
          <StatusSep $ml={12} />
          <ViewGroup>
            <ViewBtn $on $w={32}><svg width="16" height="14" viewBox="0 0 16 14" stroke="#444" strokeWidth="1"><path d="M1 1.500h14M1 5.300h14M1 9h14M1 12.700h14" /></svg></ViewBtn>
            <ViewBtn $w={33}><svg width="16" height="14" viewBox="0 0 16 14" fill="none" stroke="#444" strokeWidth="1"><rect x="1" y=".5" width="14" height="10.500" /><path d="M1 13.500h14" /></svg></ViewBtn>
          </ViewGroup>
        </StatusBar>
      </Win>
      <Taskbar>
        <StartSlot><TrayDraw.winlogo /></StartSlot>
        <SearchPill><TrayDraw.searchGlass />Search</SearchPill>
        <Apps>
          {apps.map((a, k) => (
            <AppSlot key={k}>
              {a.active && <ActiveBg />}
              <AppIcon>{a.i}</AppIcon>
              {(a.dot || a.wide) && <RunDot $wide={a.wide} />}
            </AppSlot>
          ))}
        </Apps>
        <Tray>
          <WeatherBox><TrayDraw.weather /><WeatherPill>64°</WeatherPill></WeatherBox>
          <TrayIcon $w={30}><TrayDraw.caret /></TrayIcon>
          <TrayIcon $w={30} $ml={13}><TrayDraw.cloudInfo /></TrayIcon>
          <TrayIcon $w={30} $ml={8}><TrayDraw.onedrive /></TrayIcon>
          <MicBox><TrayDraw.mic /></MicBox>
          <TrayIcon $w={30} $ml={5}><TrayDraw.wifi /></TrayIcon>
          <TrayIcon $w={30}><TrayDraw.volume /></TrayIcon>
          <TrayIcon $w={30}><TrayDraw.battery /></TrayIcon>
          <Clock>2:31 PM<br />5/28/2026</Clock>
          <TrayIcon $w={20} $ml={9}><TrayDraw.bell /></TrayIcon>
        </Tray>
      </Taskbar>
    </Desktop>
  );
}
